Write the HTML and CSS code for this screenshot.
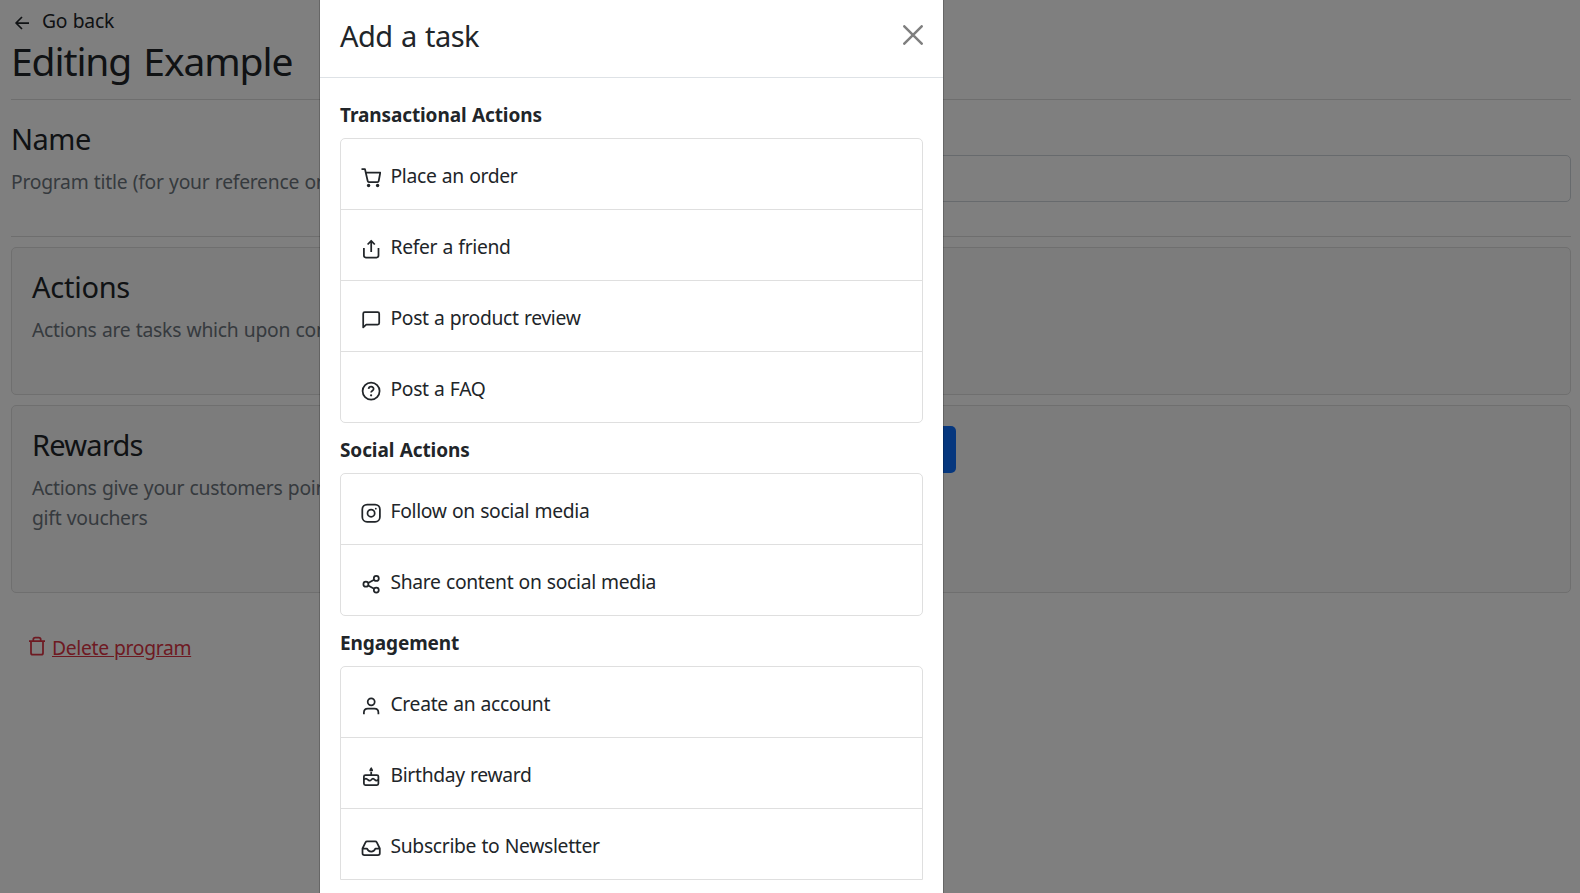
FILE: index.html
```html
<!DOCTYPE html>
<html lang="en">
<head>
<meta charset="utf-8">
<title>Editing Example</title>
<link rel="stylesheet" href="styles.css">
</head>
<body>
<main class="page">
  <a class="back"><svg class="icon" viewBox="0 0 20 20"><path d="M17 10H4M10 4l-6 6 6 6"/></svg><span>Go back</span></a>
  <h1>Editing Example</h1>
  <section class="field-row">
    <div class="info">
      <h2>Name</h2>
      <p>Program title (for your reference only)</p>
    </div>
    <input class="field" type="text" aria-label="Name">
  </section>
  <section class="card actions">
    <div class="info">
      <h2>Actions</h2>
      <p>Actions are tasks which upon completion</p>
    </div>
  </section>
  <section class="card rewards">
    <div class="info">
      <h2>Rewards</h2>
      <p>Actions give your customers points or<br>gift vouchers</p>
    </div>
    <button class="add" aria-label="Add reward"></button>
  </section>
  <a class="delete"><svg class="icon" viewBox="0 0 20 20"><path d="M2 5h16M4 5v12q0 1.700 1.700 1.700h8.600Q16 18.700 16 17V5M6.300 5V3.500Q6.300 1.500 8.300 1.500h3.400q2 0 2 2V5"/></svg><span>Delete program</span></a>
</main>
<div class="backdrop">
  <div class="modal" role="dialog">
    <header class="modal-head">
      <h3>Add a task</h3>
      <svg class="close" viewBox="0 0 20 20"><path d="M1.300 1.300l17.400 17.400M18.700 1.300L1.300 18.700"/></svg>
    </header>
    <div class="modal-body">
      <h4>Transactional Actions</h4>
      <ul class="list">
        <li><svg class="icon" viewBox="0 0 20 20"><path d="M.5 1.200H4L6.700 13q.2 1 1.200 1h8.600q1 0 1.200-1l1.600-8.500H5"/><circle class="solid" cx="7.600" cy="17.500" r="1.700"/><circle class="solid" cx="16.600" cy="17.500" r="1.700"/></svg><span>Place an order</span></li>
        <li><svg class="icon" viewBox="0 0 20 20"><path d="M2.900 9v7.600q0 1.900 1.900 1.900h10.800q1.900 0 1.900-1.900V9M10.200 13V2M6.600 5.500l3.600-3.700 3.600 3.700"/></svg><span>Refer a friend</span></li>
        <li><svg class="icon" viewBox="0 0 20 20"><path d="M2.200 17.400V3.700q0-1.500 1.500-1.500h13q1.500 0 1.500 1.500v9.400q0 1.500-1.500 1.500H5.200z"/></svg><span>Post a product review</span></li>
        <li><svg class="icon" viewBox="0 0 20 20"><circle cx="10.100" cy="10.100" r="8.500"/><path d="M7.600 7.900C7.900 4.900 12.800 5 12.600 8c-.1 1.800-2.500 1.700-2.500 3.600"/><circle class="solid" cx="10.100" cy="14.300" r="1.100"/></svg><span>Post a FAQ</span></li>
      </ul>
      <h4>Social Actions</h4>
      <ul class="list">
        <li><svg class="icon" viewBox="0 0 20 20"><rect x="1.300" y="1.500" width="17.600" height="17.400" rx="4.800"/><circle cx="10.100" cy="10.200" r="3.600"/><circle class="solid" cx="14.800" cy="5.700" r=".9"/></svg><span>Follow on social media</span></li>
        <li><svg class="icon" viewBox="0 0 20 20"><circle cx="4.900" cy="10.200" r="2.500"/><circle cx="15.300" cy="4.400" r="2.500"/><circle cx="15.300" cy="16" r="2.500"/><path d="M7.200 9l5.900-3.300M7.200 11.400l5.900 3.300"/></svg><span>Share content on social media</span></li>
      </ul>
      <h4>Engagement</h4>
      <ul class="list open">
        <li><svg class="icon" viewBox="0 0 20 20"><circle cx="10.200" cy="5.800" r="3.500"/><path d="M2.900 18.200v-1.700q0-3.900 3.900-3.900h6.700q3.900 0 3.900 3.900v1.700"/></svg><span>Create an account</span></li>
        <li><svg class="icon" viewBox="0 0 20 20"><rect x="2.900" y="8" width="14.500" height="10" rx="1.500"/><path d="M10.200 8V5M3 12.700q1.900-2.400 3.800 0 1.800 2 3.500 0 1.700-2.400 3.400 0 1.800 2 3.600 0"/><path class="solid" d="M10.200.1q3.800 4.500 0 4.500-3.800 0 0-4.500z"/></svg><span>Birthday reward</span></li>
        <li><svg class="icon" viewBox="0 0 20 20"><path d="M1.500 10.500l3-6.200q.5-1 1.600-1h8.100q1.100 0 1.600 1l3 6.200v4.800q0 1.900-1.900 1.900H3.400q-1.900 0-1.900-1.900zM1.500 10.500H6q1 3 4.200 3t4.200-3h4.400"/></svg><span>Subscribe to Newsletter</span></li>
      </ul>
    </div>
  </div>
</div>
</body>
</html>
```
FILE: styles.css
```css
* { box-sizing: border-box; }
html, body { margin: 0; height: 100%; overflow: hidden; }
body {
  background: #fff;
  color: #212529;
  font: 19.3px/30px "Noto Sans", "Open Sans", sans-serif;
  letter-spacing: -.32px;
  word-spacing: .6px;
}
h1, h2, h3, h4, p, ul { margin: 0; padding: 0; font-weight: 400; }
.icon {
  width: 20px;
  height: 20px;
  flex: none;
  fill: none;
  stroke: currentColor;
  stroke-width: 1.750;
  stroke-linejoin: round;
}
.solid { fill: currentColor; stroke: none; }

.page { padding: 6px 9px 0 11px; }
.back { display: flex; gap: 10px; letter-spacing: -.2px; }
.back .icon { margin: 7px 0 0 1px; }
h1 { font-size: 39px; line-height: 48px; height: 62px; margin-top: 1px; letter-spacing: -1.100px; word-spacing: 3px; }
h2 { font-size: 29px; line-height: 36px; margin-bottom: 10px; letter-spacing: -.5px; }
.info { width: 600px; flex: none; white-space: nowrap; }
.info p { color: #6c757d; letter-spacing: -.25px; }
.field-row {
  display: flex;
  height: 138px;
  padding-top: 21px;
  border-top: 1px solid #dcdcdc;
  border-bottom: 1px solid #dcdcdc;
}
.field {
  flex: 1;
  height: 47px;
  margin-top: 34px;
  border: 1px solid #ced4da;
  border-radius: 5px;
  background: #fff;
}
.card {
  display: flex;
  margin-top: 10px;
  padding: 21px 20px;
  background: #f8f8f8;
  border: 1px solid #dfdfdf;
  border-radius: 5px;
}
.actions { height: 148px; }
.actions h2 { letter-spacing: -.250px; }
.rewards { height: 188px; }
.rewards h2 { letter-spacing: -.750px; }
.add {
  width: 324px;
  height: 47px;
  border: 0;
  border-radius: 5px;
  background: #0d6efd;
}
.rewards .add { margin-top: -1px; }
.delete { display: flex; gap: 5px; margin: 40px 0 0 16px; color: #dc3545; }
.delete .icon { margin-top: 3px; }
.delete span { text-decoration: underline; }

.backdrop {
  position: fixed;
  inset: 0;
  display: flex;
  background: rgba(0, 0, 0, .5);
}
.modal {
  width: 625px;
  margin-left: 319px;
  background: #fff;
  background-clip: padding-box;
  border: solid rgba(0, 0, 0, .2);
  border-width: 0 1px;
}
.modal-head {
  display: flex;
  justify-content: space-between;
  height: 78px;
  padding: 17px 20px 0;
  border-bottom: 1px solid #dee2e6;
}
h3 { font-size: 29px; line-height: 38px; letter-spacing: -.500px; word-spacing: 1.200px; }
.close {
  width: 20px;
  height: 20px;
  margin-top: 8px;
  fill: none;
  stroke: #7f7f7f;
  stroke-width: 2.500;
  stroke-linecap: round;
}
.modal-body { padding: 22px 20px 0; }
h4 { font-size: 19px; line-height: 30px; font-weight: 700; padding-bottom: 8px; letter-spacing: -.1px; }
.list {
  list-style: none;
  margin-bottom: 12px;
  border: 1px solid #dfdfdf;
  border-radius: 5px;
}
.list li { display: flex; gap: 9.500px; height: 71px; padding: 22px 20px 0; }
.list li:first-child { height: 70px; }
.list li + li { border-top: 1px solid #dfdfdf; }
.list li .icon { margin-top: 7px; }
.open { border-radius: 5px 5px 0 0; }
```
